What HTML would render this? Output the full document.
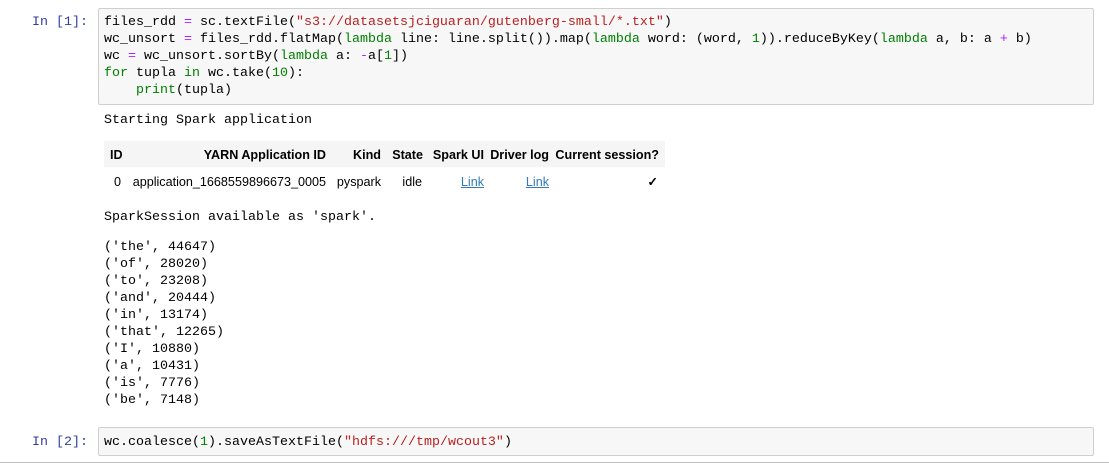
<!DOCTYPE html>
<html><head><style>
body{margin:0;width:1109px;height:468px;background:#fff;position:relative;overflow:hidden;font-family:"Liberation Mono",monospace;font-size:13.33px;}
.a{position:absolute;white-space:pre;line-height:17px;}
.p{color:#303f9f;text-align:right;width:88px;left:0}
.box{position:absolute;left:98px;width:994px;background:#f7f7f7;border:1px solid #cfcfcf;border-radius:2px}
.k{color:#008000}.s{color:#ba2121}.o{color:#aa22ff}.n{color:#008000}
.t{position:absolute;font-family:"Liberation Sans",Arial,sans-serif;font-size:12.6px;white-space:nowrap;line-height:14px;color:#000}
.h{font-weight:bold}
.l{color:#337ab7;text-decoration:underline}
</style></head><body>
<div class="a p" style="top:13.5px">In [1]:</div>
<div class="box" style="top:8px;height:95px"></div>
<div class="a" style="left:104px;top:13.5px">files_rdd <span class="o">=</span> sc.textFile(<span class="s">"s3://datasetsjciguaran/gutenberg-small/*.txt"</span>)
wc_unsort <span class="o">=</span> files_rdd.flatMap(<span class="k">lambda</span> line: line.split()).map(<span class="k">lambda</span> word: (word, <span class="n">1</span>)).reduceByKey(<span class="k">lambda</span> a, b: a <span class="o">+</span> b)
wc <span class="o">=</span> wc_unsort.sortBy(<span class="k">lambda</span> a: <span class="o">-</span>a[<span class="n">1</span>])
<span class="k">for</span> tupla <span class="k">in</span> wc.take(<span class="n">10</span>):
    <span class="k">print</span>(tupla)</div>
<div class="a" style="left:104px;top:111.5px">Starting Spark application</div>
<div style="position:absolute;left:104px;top:141px;width:561px;height:26px;background:#f5f5f5"></div>
<div class="t h" style="left:110px;top:148px">ID</div>
<div class="t h" style="right:783px;top:148px">YARN Application ID</div>
<div class="t h" style="right:728px;top:148px">Kind</div>
<div class="t h" style="right:686px;top:148px">State</div>
<div class="t h" style="right:625px;top:148px">Spark UI</div>
<div class="t h" style="right:560px;top:148px">Driver log</div>
<div class="t h" style="right:450px;top:148px">Current session?</div>
<div class="t" style="right:988px;top:175px">0</div>
<div class="t" style="right:783px;top:175px">application_1668559896673_0005</div>
<div class="t" style="right:728px;top:175px">pyspark</div>
<div class="t" style="right:687px;top:175px">idle</div>
<div class="t l" style="right:625px;top:175px">Link</div>
<div class="t l" style="right:560px;top:175px">Link</div>
<div class="t h" style="right:451px;top:175px">✓</div>
<div class="a" style="left:104px;top:208.5px">SparkSession available as 'spark'.</div>
<div class="a" style="left:104px;top:238.5px">('the', 44647)
('of', 28020)
('to', 23208)
('and', 20444)
('in', 13174)
('that', 12265)
('I', 10880)
('a', 10431)
('is', 7776)
('be', 7148)</div>
<div class="a p" style="top:433.5px">In [2]:</div>
<div class="box" style="top:427px;height:27px"></div>
<div class="a" style="left:104px;top:433.5px">wc.coalesce(<span class="n">1</span>).saveAsTextFile(<span class="s">"hdfs:///tmp/wcout3"</span>)</div>
<div style="position:absolute;left:0;top:462px;width:1109px;height:1px;background:#c0c0c0"></div>
</body></html>
